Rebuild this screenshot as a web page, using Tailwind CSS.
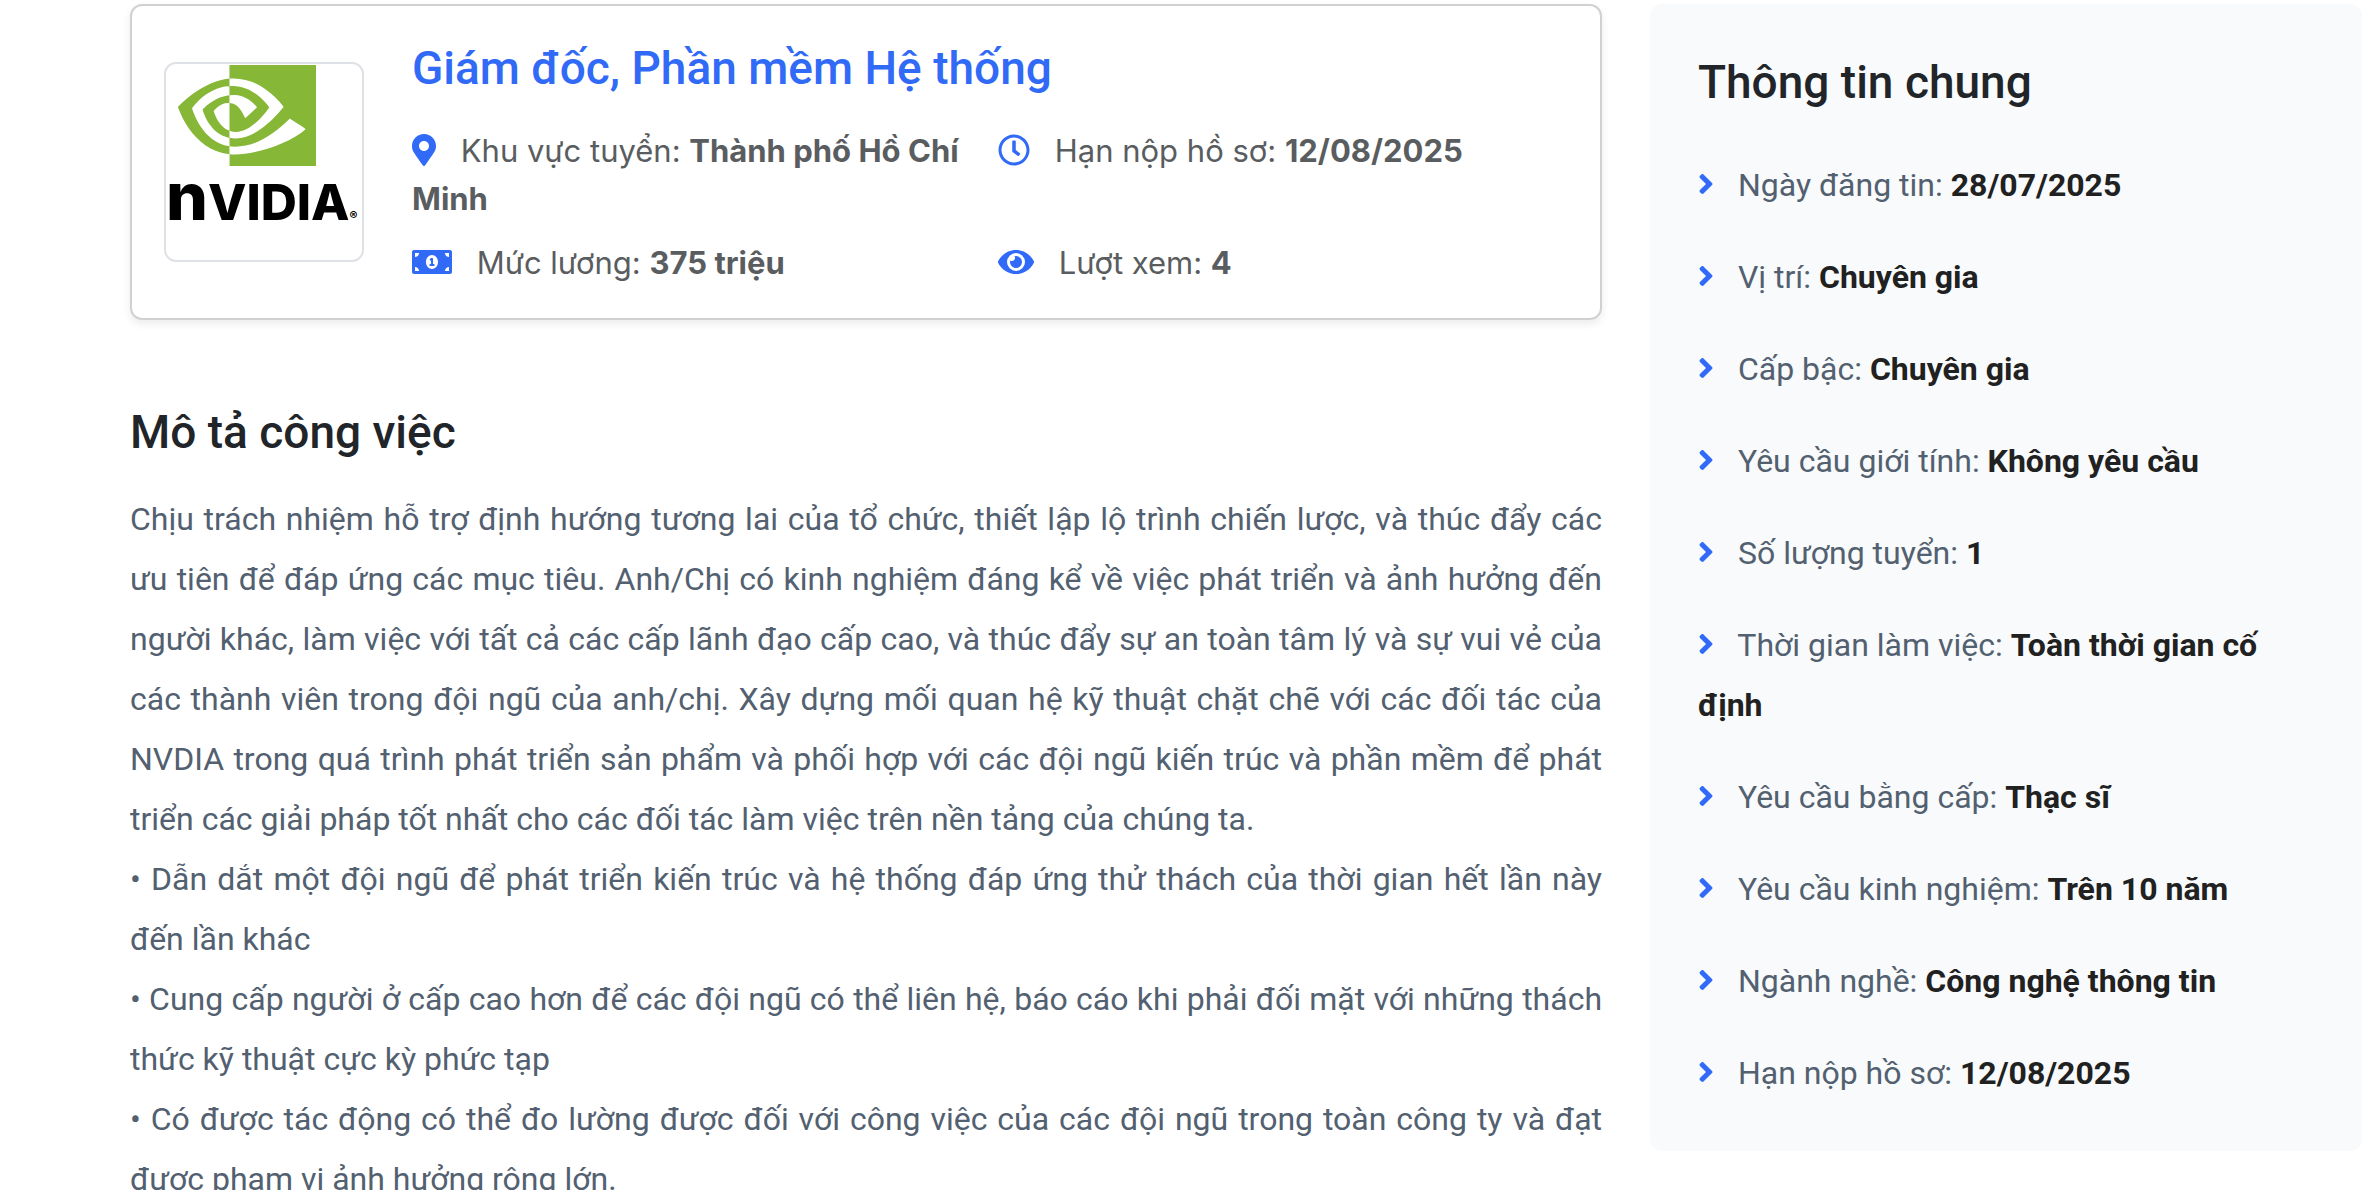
<!DOCTYPE html>
<html lang="vi">
<head>
    <meta charset="UTF-8">
    <meta name="viewport" content="width=device-width, initial-scale=1.0">
    <title>Giám đốc, Phần mềm Hệ thống</title>
    <script src="https://cdn.jsdelivr.net/npm/@tailwindcss/browser@4"></script>
</head>
<body class="bg-white font-['Roboto',sans-serif] text-[32px] leading-[60px] text-[#526070]">
    <!-- Icons -->
    <svg class="hidden">
        <symbol id="angle" viewBox="0 0 256 512"><path d="M224.3 273l-136 136c-9.4 9.4-24.6 9.4-33.9 0l-22.6-22.6c-9.4-9.4-9.4-24.6 0-33.9l96.4-96.4-96.4-96.4c-9.4-9.4-9.4-24.6 0-33.9L54.3 103c9.4-9.4 24.6-9.4 33.9 0l136 136c9.5 9.4 9.5 24.6.1 34z"/></symbol>
    </svg>

    <main class="grid grid-cols-3 items-start gap-12 pt-1 pl-[130px] pr-[6px]">
        <div class="col-span-2">
            <!-- Job header -->
            <section class="flex items-center rounded-xl border-2 border-[#d0d1d2] py-[31px] pl-8 pr-4 shadow-[0_4px_8px_rgba(0,0,0,0.08)]">
                <div class="flex h-[200px] w-[200px] shrink-0 flex-col overflow-hidden rounded-xl border-2 border-[#dee2e6]">
                    <svg class="mt-px ml-3 h-[101px] w-[138px] shrink-0" viewBox="0 4.063 24 15.874" preserveAspectRatio="none" fill="#86b737" aria-hidden="true">
                        <path d="M8.948 8.798v-1.43a6.7 6.7 0 0 1 .424-.018c3.922-.124 6.493 3.374 6.493 3.374s-2.774 3.851-5.75 3.851c-.398 0-.787-.062-1.158-.185v-4.346c1.528.185 1.837.857 2.747 2.385l2.04-1.714s-1.492-1.952-4-1.952a6.016 6.016 0 0 0-.796.035m0-4.735v2.138l.424-.027c5.45-.185 9.01 4.47 9.01 4.47s-4.08 4.964-8.33 4.964c-.37 0-.733-.035-1.095-.097v1.325c.3.035.61.062.91.062 3.957 0 6.82-2.023 9.593-4.408.459.371 2.34 1.263 2.73 1.652-2.633 2.208-8.772 3.984-12.253 3.984-.335 0-.653-.018-.971-.053v1.864H24V4.063zm0 10.326v1.131c-3.657-.654-4.673-4.46-4.673-4.46s1.758-1.944 4.673-2.262v1.237H8.94c-1.528-.186-2.73 1.245-2.73 1.245s.68 2.412 2.739 3.11M2.456 10.9s2.164-3.197 6.5-3.533V6.201C4.153 6.59 0 10.653 0 10.653s2.35 6.802 8.948 7.42v-1.237c-4.84-.6-6.492-5.936-6.492-5.936z"/>
                    </svg>
                    <div class="flex items-baseline font-['Inter',sans-serif] text-[50px] leading-[60px] font-extrabold text-black">
                        <span class="text-[66px]">n</span><span>VIDIA</span><span class="text-xs">®</span>
                    </div>
                </div>
                <div class="min-w-0 grow pt-0.5 pl-12">
                    <h1 class="mb-[30px] text-[46px] leading-[58px] font-medium text-[#306af6]">Giám đốc, Phần mềm Hệ thống</h1>
                    <div class="grid grid-cols-2 gap-y-4 font-['Inter',sans-serif] text-[31px] leading-[48px] text-[#5a5d60]">
                        <p><svg class="mr-4 inline h-8 w-6 align-[-4px] fill-[#306af6]" viewBox="0 0 384 512"><path d="M172.268 501.67C26.97 291.031 0 269.413 0 192 0 85.961 85.961 0 192 0s192 85.961 192 192c0 77.413-26.97 99.031-172.268 309.67-9.535 13.774-29.93 13.773-39.464 0zM192 272c44.183 0 80-35.817 80-80s-35.817-80-80-80-80 35.817-80 80 35.817 80 80 80z"/></svg> Khu vực tuyển: <b>Thành phố Hồ Chí Minh</b></p>
                        <p><svg class="mr-4 inline h-8 w-8 align-[-4px] fill-[#306af6]" viewBox="0 0 512 512"><path d="M256 8C119 8 8 119 8 256s111 248 248 248 248-111 248-248S393 8 256 8zm0 448c-110.5 0-200-89.5-200-200S145.5 56 256 56s200 89.5 200 200-89.5 200-200 200zm61.8-104.4l-84.9-61.7c-3.1-2.3-4.9-5.9-4.9-9.7V116c0-6.6 5.4-12 12-12h32c6.6 0 12 5.4 12 12v141.7l66.8 48.6c5.4 3.9 6.5 11.4 2.6 16.8L334.6 349c-3.9 5.3-11.4 6.5-16.8 2.6z"/></svg> Hạn nộp hồ sơ: <b>12/08/2025</b></p>
                        <p><svg class="mr-4 inline h-8 w-10 align-[-4px] fill-[#306af6]" viewBox="0 0 640 512"><path d="M352 288h-16v-88c0-4.42-3.58-8-8-8h-13.58c-4.74 0-9.38 1.4-13.31 4.03l-15.33 10.22a7.994 7.994 0 0 0-2.22 11.09l8.88 13.31a7.994 7.994 0 0 0 11.09 2.22l.47-.31V288h-16c-4.42 0-8 3.58-8 8v16c0 4.42 3.58 8 8 8h64c4.42 0 8-3.58 8-8v-16c0-4.42-3.58-8-8-8zM608 64H32C14.33 64 0 78.33 0 96v320c0 17.67 14.33 32 32 32h576c17.67 0 32-14.33 32-32V96c0-17.67-14.33-32-32-32zM48 400v-64c35.35 0 64 28.65 64 64H48zm0-224v-64h64c0 35.35-28.65 64-64 64zm272 192c-53.02 0-96-50.15-96-112 0-61.86 42.98-112 96-112s96 50.13 96 112c0 61.87-43 112-96 112zm272 32h-64c0-35.35 28.65-64 64-64v64zm0-224c-35.35 0-64-28.65-64-64h64v64z"/></svg> Mức lương: <b>375 triệu</b></p>
                        <p><svg class="mr-4 inline h-8 w-9 align-[-4px] fill-[#306af6]" viewBox="0 0 576 512"><path d="M572.52 241.4C518.29 135.59 410.93 64 288 64S57.68 135.64 3.48 241.41a32.35 32.35 0 0 0 0 29.19C57.71 376.41 165.07 448 288 448s230.32-71.64 284.52-177.41a32.35 32.35 0 0 0 0-29.19zM288 400a144 144 0 1 1 144-144 143.93 143.93 0 0 1-144 144zm0-240a95.31 95.31 0 0 0-25.31 3.79 47.85 47.85 0 0 1-66.9 66.9A95.78 95.78 0 1 0 288 160z"/></svg> Lượt xem: <b>4</b></p>
                    </div>
                </div>
            </section>

            <!-- Job description -->
            <section class="mt-[83px]">
                <h2 class="mb-7 text-[46px] leading-[58px] font-medium text-[#212529]">Mô tả công việc</h2>
                <div class="text-justify">
                    <p>Chịu trách nhiệm hỗ trợ định hướng tương lai của tổ chức, thiết lập lộ trình chiến lược, và thúc đẩy các ưu tiên để đáp ứng các mục tiêu. Anh/Chị có kinh nghiệm đáng kể về việc phát triển và ảnh hưởng đến người khác, làm việc với tất cả các cấp lãnh đạo cấp cao, và thúc đẩy sự an toàn tâm lý và sự vui vẻ của các thành viên trong đội ngũ của anh/chị. Xây dựng mối quan hệ kỹ thuật chặt chẽ với các đối tác của NVDIA trong quá trình phát triển sản phẩm và phối hợp với các đội ngũ kiến trúc và phần mềm để phát triển các giải pháp tốt nhất cho các đối tác làm việc trên nền tảng của chúng ta.</p>
                    <p>• Dẫn dắt một đội ngũ để phát triển kiến trúc và hệ thống đáp ứng thử thách của thời gian hết lần này đến lần khác</p>
                    <p>• Cung cấp người ở cấp cao hơn để các đội ngũ có thể liên hệ, báo cáo khi phải đối mặt với những thách thức kỹ thuật cực kỳ phức tạp</p>
                    <p>• Có được tác động có thể đo lường được đối với công việc của các đội ngũ trong toàn công ty và đạt được phạm vi ảnh hưởng rộng lớn.</p>
                </div>
            </section>
        </div>

        <!-- Summary -->
        <aside class="rounded-xl bg-[#f8fafb] px-12 pt-[49px] pb-12">
            <h2 class="mb-11 text-[46px] leading-[58px] font-medium text-[#212529]">Thông tin chung</h2>
            <ul class="space-y-8 [&_b]:text-[#212121]">
                <li><svg class="mr-4 inline h-8 w-4 align-[-4px] fill-[#306af6]"><use href="#angle"/></svg> Ngày đăng tin: <b>28/07/2025</b></li>
                <li><svg class="mr-4 inline h-8 w-4 align-[-4px] fill-[#306af6]"><use href="#angle"/></svg> Vị trí: <b>Chuyên gia</b></li>
                <li><svg class="mr-4 inline h-8 w-4 align-[-4px] fill-[#306af6]"><use href="#angle"/></svg> Cấp bậc: <b>Chuyên gia</b></li>
                <li><svg class="mr-4 inline h-8 w-4 align-[-4px] fill-[#306af6]"><use href="#angle"/></svg> Yêu cầu giới tính: <b>Không yêu cầu</b></li>
                <li><svg class="mr-4 inline h-8 w-4 align-[-4px] fill-[#306af6]"><use href="#angle"/></svg> Số lượng tuyển: <b>1</b></li>
                <li><svg class="mr-4 inline h-8 w-4 align-[-4px] fill-[#306af6]"><use href="#angle"/></svg> Thời gian làm việc: <b>Toàn thời gian cố định</b></li>
                <li><svg class="mr-4 inline h-8 w-4 align-[-4px] fill-[#306af6]"><use href="#angle"/></svg> Yêu cầu bằng cấp: <b>Thạc sĩ</b></li>
                <li><svg class="mr-4 inline h-8 w-4 align-[-4px] fill-[#306af6]"><use href="#angle"/></svg> Yêu cầu kinh nghiệm: <b>Trên 10 năm</b></li>
                <li><svg class="mr-4 inline h-8 w-4 align-[-4px] fill-[#306af6]"><use href="#angle"/></svg> Ngành nghề: <b>Công nghệ thông tin</b></li>
                <li><svg class="mr-4 inline h-8 w-4 align-[-4px] fill-[#306af6]"><use href="#angle"/></svg> Hạn nộp hồ sơ: <b>12/08/2025</b></li>
            </ul>
        </aside>
    </main>
</body>
</html>
